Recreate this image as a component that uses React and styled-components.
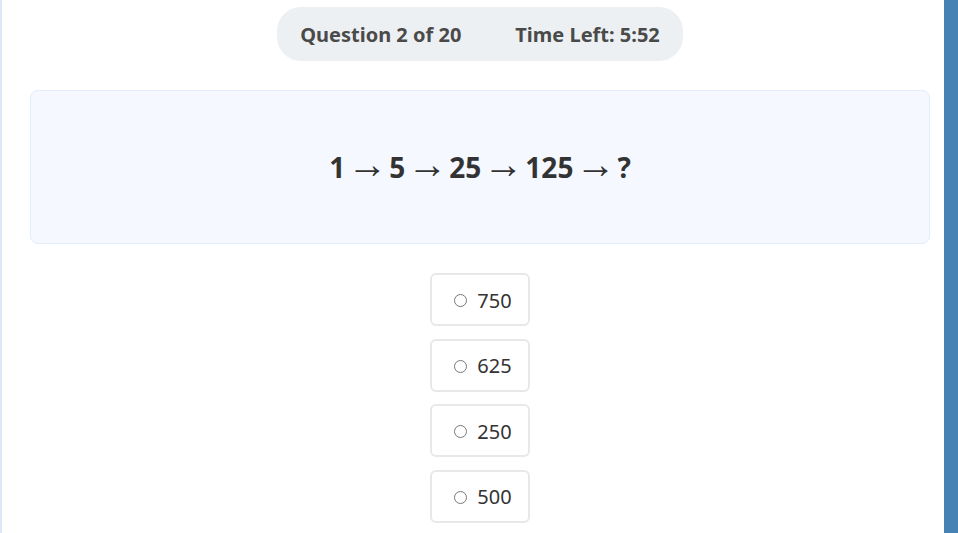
import React from "react";
import styled, { createGlobalStyle } from "styled-components";

const Global = createGlobalStyle`
  html, body {
    margin: 0;
    padding: 0;
    background: #fff;
  }
  body {
    font-family: "Noto Sans", "Open Sans", sans-serif;
    color: #333;
  }
`;

const Frame = styled.div`
  display: flex;
  height: 533px;
  overflow: hidden;
  border-left: 2px solid #dde9f8;
  border-right: 14px solid #4682b4;
`;

const Main = styled.div`
  flex: 1;
  padding: 7px 14px 0 28px;
  display: flex;
  flex-direction: column;
  align-items: center;
`;

const StatusBar = styled.div`
  display: flex;
  gap: 54px;
  align-items: center;
  height: 54px;
  padding: 1px 23px 0;
  box-sizing: border-box;
  background: #edf0f3;
  border-radius: 24px;
  font-size: 20px;
  font-weight: 700;
  color: #4a4a4a;
`;

const QuestionBox = styled.div`
  box-sizing: border-box;
  align-self: stretch;
  margin-top: 29px;
  height: 154px;
  display: flex;
  align-items: baseline;
  justify-content: center;
  gap: 2px;
  padding-top: 52px;
  line-height: 1;
  background: #f5f9ff;
  border: 1px solid #e2edfb;
  border-radius: 8px;
  font-size: 28px;
  font-weight: 700;
  color: #333;
`;

const Arrow = styled.span`
  font-weight: 400;
  font-size: 40px;
`;

const Options = styled.div`
  margin-top: 29px;
  display: flex;
  flex-direction: column;
  gap: 12.5px;
`;

const Option = styled.label`
  box-sizing: border-box;
  width: 100px;
  height: 53px;
  display: flex;
  align-items: center;
  justify-content: center;
  gap: 10px;
  padding-left: 6px;
  padding-top: 1px;
  background: #fff;
  border: 2px solid #e8e8e8;
  border-radius: 6px;
  font-size: 20px;
  color: #333;
`;

const Radio = styled.span`
  box-sizing: border-box;
  width: 13px;
  height: 13px;
  border-radius: 50%;
  border: 1px solid #777;
  margin-top: 1px;
`;

const sequence = ["1", "5", "25", "125", "?"];
const answers = ["750", "625", "250", "500"];

const App = () => {
  return (
    <>
      <Global />
      <Frame>
        <Main>
          <StatusBar>
            <span>Question 2 of 20</span>
            <span>Time Left: 5:52</span>
          </StatusBar>
          <QuestionBox>
            {sequence.map((n, i) => (
              <React.Fragment key={n}>
                {i > 0 && <Arrow>→</Arrow>}
                <span>{n}</span>
              </React.Fragment>
            ))}
          </QuestionBox>
          <Options>
            {answers.map((a) => (
              <Option key={a}>
                <Radio />
                {a}
              </Option>
            ))}
          </Options>
        </Main>
      </Frame>
    </>
  );
};

export default App;
